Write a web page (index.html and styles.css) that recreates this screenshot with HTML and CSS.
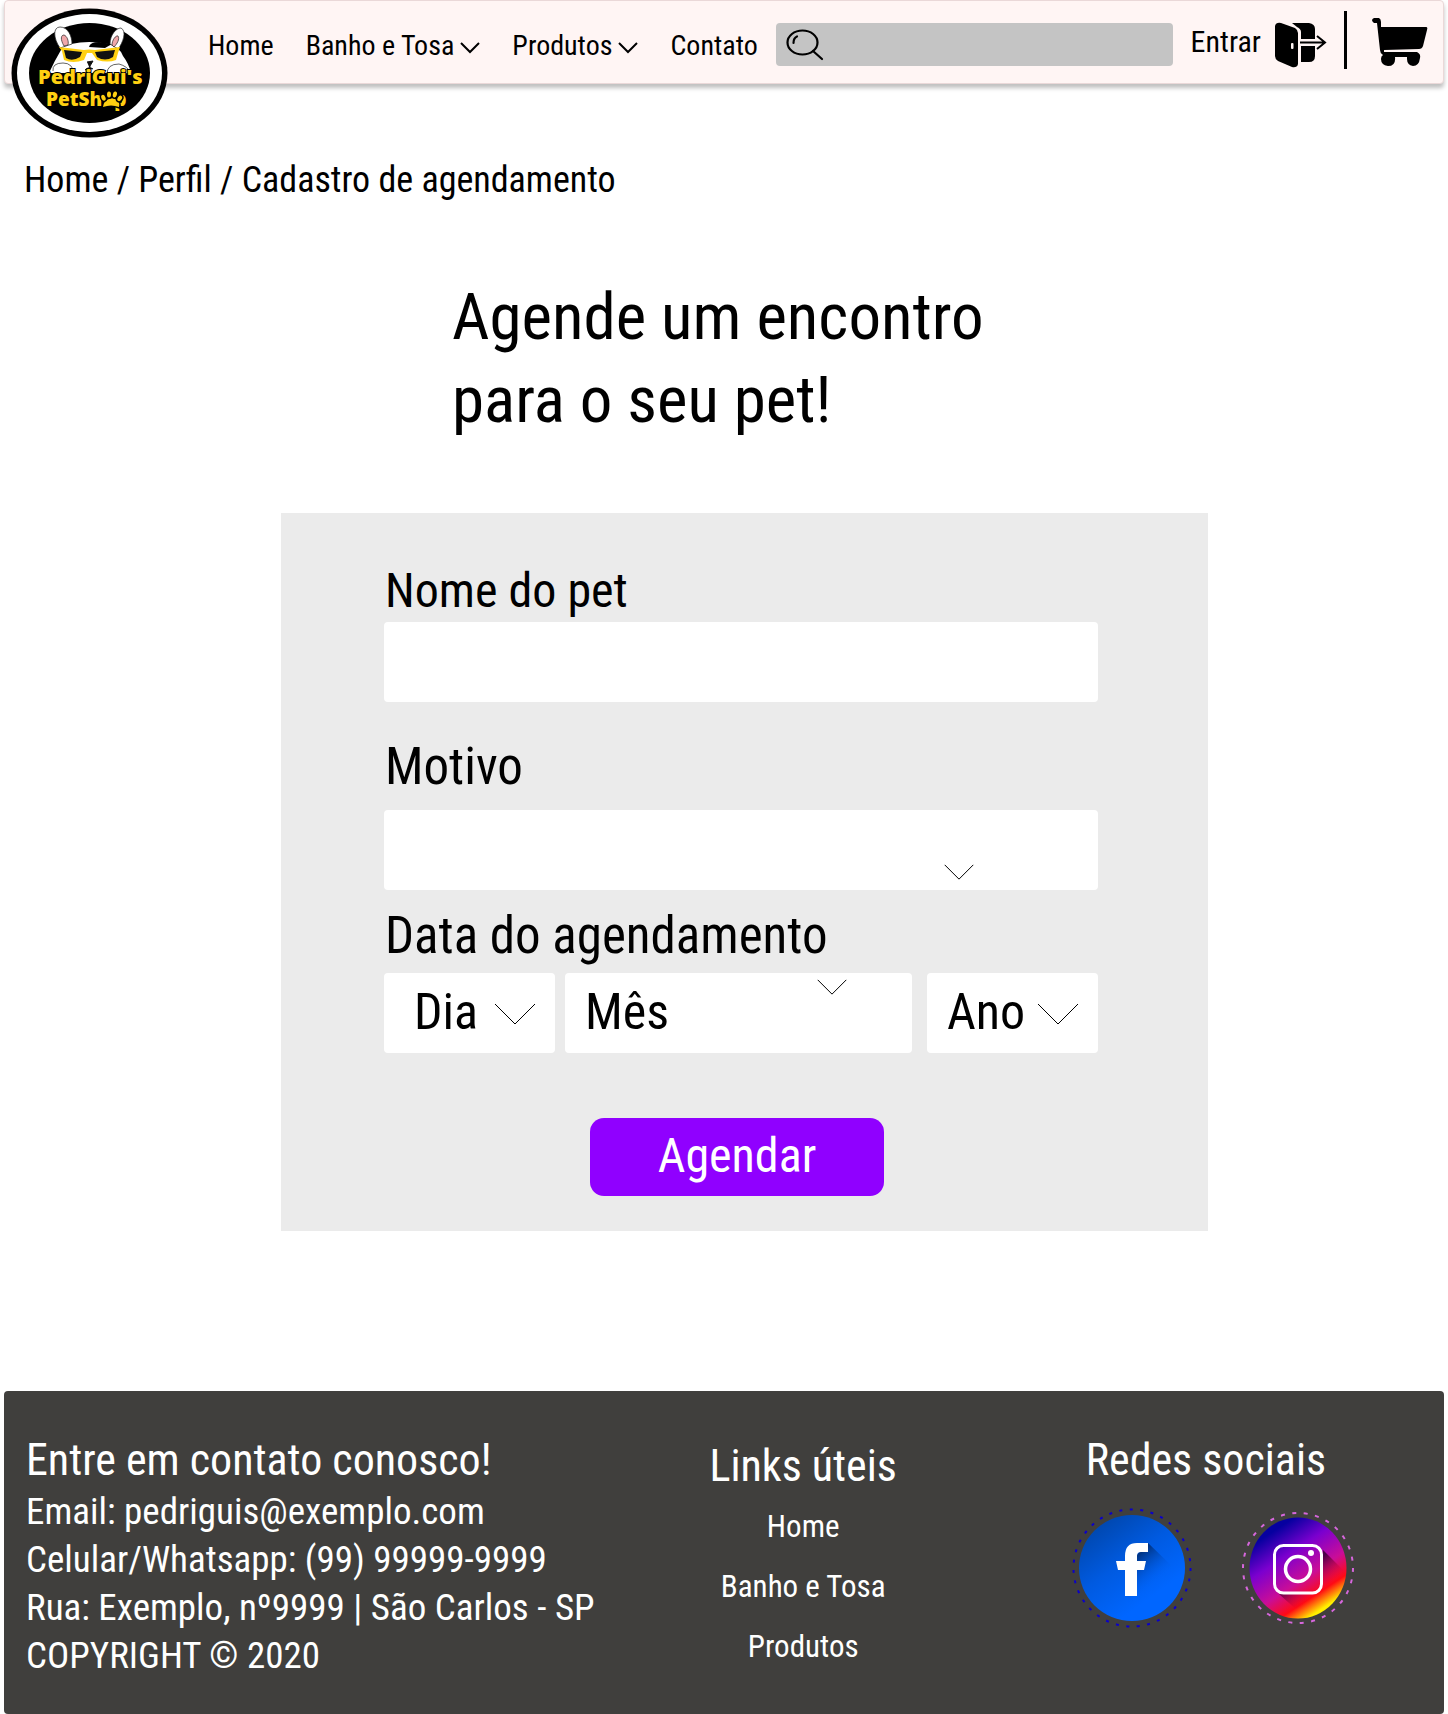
FILE: index.html
```html
<!DOCTYPE html>
<html lang="pt-BR">
<head>
<meta charset="utf-8">
<meta name="viewport" content="width=device-width, initial-scale=1">
<title>PedriGui's PetShop - Cadastro de agendamento</title>
<link rel="stylesheet" href="styles.css">
</head>
<body>
<header class="topbar">
  <a class="logo" href="#" aria-label="PedriGui's PetShop">
    <svg viewBox="0 0 157 130" width="157" height="130">
      <ellipse cx="78.500" cy="65" rx="78" ry="64.500" fill="#000"/>
      <ellipse cx="78.500" cy="65" rx="72.500" ry="59" fill="#fff"/>
      <ellipse cx="78.500" cy="65" rx="60.500" ry="50" fill="#000"/>
      <path d="M38 65Q44 52 50 42Q50 37 60 36Q78 32 97 36Q108 38 112 48Q118 56 120 65Z" fill="#fff"/>
      <path d="M78 39Q79 34 88 34L101 36L94 40Z" fill="#000"/>
      <path d="M49 40C42 30 42 19 49 19C57 19 61 28 61 36Z" fill="#fff" stroke="#222" stroke-width=".7"/>
      <path d="M53 38C49 31 50 27 53 27C56 28 58 33 57 37Z" fill="#f0a7aa" stroke="#222" stroke-width=".7"/>
      <path d="M99 36C99 27 105 20 110 20C116 23 112 35 107 41Z" fill="#fff" stroke="#222" stroke-width=".7"/>
      <path d="M101 37C101 32 105 27 107 28C109 31 106 36 103 39Z" fill="#f0a7aa" stroke="#222" stroke-width=".7"/>
      <path d="M42 63Q41 55 52 55Q62 55 63 66M96 66Q96 56 108 56Q116 58 120 65" fill="#fff" stroke="#222" stroke-width=".7"/>
      <path d="M48 39L73 42Q78 41 84 42L109 39L107 45L105 52Q97 55 86 52L81 45H76L73 52Q62 56 53 52L51 43Z" fill="#ffd011"/>
      <path d="M53 42L71 44L69 49Q61 54 55 50ZM84 44L104 42L102 49Q94 54 86 49Z" fill="#111"/>
      <path d="M76 54L82 53L79 58V61M74 62Q78 58 82 61" fill="#111" stroke="#111"/>
      <text class="logo-text" x="27" y="76">PedriGui's</text>
      <text class="logo-text logo-text-small" x="35" y="98">PetShop</text>
      <g fill="#ffd011" stroke="#000" stroke-width="3" paint-order="stroke">
        <path d="M92 99Q93 92 98 91Q102 89 106 92Q109 94 108 99Q100 96 92 99Z"/>
        <ellipse cx="92.500" cy="90" rx="2" ry="3" transform="rotate(-25 92 90)"/>
        <ellipse cx="98" cy="86.500" rx="2" ry="3"/>
        <ellipse cx="104" cy="86.500" rx="2" ry="3" transform="rotate(15 104 86)"/>
        <ellipse cx="109" cy="90.500" rx="2" ry="3" transform="rotate(35 109 90)"/>
      </g>
    </svg>
  </a>
  <nav class="nav" aria-label="Principal">
    <a href="#">Home</a>
    <a href="#">Banho e Tosa<svg class="caret" viewBox="0 0 20 12" width="20" height="12"><path d="M1 1L10 10L19 1"/></svg></a>
    <a href="#">Produtos<svg class="caret" viewBox="0 0 20 12" width="20" height="12"><path d="M1 1L10 10L19 1"/></svg></a>
    <a href="#">Contato</a>
  </nav>
  <form class="search" role="search">
    <svg viewBox="0 0 38 32" width="38" height="32" fill="none" stroke="#000" stroke-width="2.200" stroke-linecap="round">
      <ellipse cx="16.500" cy="13.500" rx="15" ry="12"/><path d="M27 22L36 30"/><path d="M7.500 14Q7.500 9 11 7.500"/>
    </svg>
    <input type="search" aria-label="Buscar">
  </form>
  <a class="login" href="#">Entrar
    <svg viewBox="0 0 52 46" width="52" height="46">
      <path d="M17 1H34Q40 2 40 7V17H26V10Q26 7 22 5Z"/>
      <path d="M26 24H40V34Q40 40 34 40H26Z"/>
      <path d="M0 4Q1 0 6 1L20 6Q23 8 23 11V42Q22 46 17 45L3 39Q0 37 0 34Z"/>
      <rect x="16" y="21" width="2.500" height="6" rx="1" fill="#fff5f4"/>
      <path d="M25 20.500H40" fill="none" stroke="#fff5f4" stroke-width="6"/>
      <path d="M25 20.500H50M42 14L50 20.500L42 27" fill="none" stroke="#000" stroke-width="2"/>
    </svg>
  </a>
  <span class="divider"></span>
  <a class="cart" href="#" aria-label="Carrinho">
    <svg viewBox="0 0 56 49" width="56" height="49">
      <path d="M2 0H7Q9 1 9 4V9H54Q56 9 55 12L51 28Q50 31 47 31L12 32V34H45Q49 36 48 40Q47 48 41 48Q35 47 35 41L35 39H23Q24 48 16 48Q9 47 9 41Q9 38 11 37Q8 35 8 32L5 5H2Q-2 2 2 0Z"/>
    </svg>
  </a>
</header>
<main>
  <nav class="breadcrumb" aria-label="Trilha"><a href="#">Home</a> / <a href="#">Perfil</a> / <span>Cadastro de agendamento</span></nav>
  <h1 class="title">Agende um encontro<br>para o seu pet!</h1>
  <form class="panel">
    <div class="field">
      <label class="label label-name" for="pet">Nome do pet</label>
      <input class="control" id="pet" type="text">
    </div>
    <div class="field field-reason">
      <label class="label" for="motivo">Motivo</label>
      <div class="picker picker-reason">
        <select class="control" id="motivo"><option></option></select>
        <svg class="chevron" viewBox="0 0 42 22" width="30" height="16"><path d="M1 1L21 21L41 1"/></svg>
      </div>
    </div>
    <fieldset class="field field-date">
      <legend class="label">Data do agendamento</legend>
      <div class="date-row">
        <div class="picker picker-day">
          <select class="control" aria-label="Dia"><option>Dia</option></select>
          <svg class="chevron" viewBox="0 0 42 22" width="42" height="22"><path d="M1 1L21 21L41 1"/></svg>
        </div>
        <div class="picker picker-month">
          <select class="control" aria-label="Mês"><option>Mês</option></select>
          <svg class="chevron" viewBox="0 0 42 22" width="30" height="16"><path d="M1 1L21 21L41 1"/></svg>
        </div>
        <div class="picker picker-year">
          <select class="control" aria-label="Ano"><option>Ano</option></select>
          <svg class="chevron" viewBox="0 0 42 22" width="42" height="22"><path d="M1 1L21 21L41 1"/></svg>
        </div>
      </div>
    </fieldset>
    <button class="submit" type="submit">Agendar</button>
  </form>
</main>
<footer class="footer">
  <section class="contact">
    <h2>Entre em contato conosco!</h2>
    <p>Email: pedriguis@exemplo.com</p>
    <p>Celular/Whatsapp: (99) 99999-9999</p>
    <p>Rua: Exemplo, nº9999 | São Carlos - SP</p>
    <p>COPYRIGHT © 2020</p>
  </section>
  <nav class="links" aria-label="Links úteis">
    <h2>Links úteis</h2>
    <a href="#">Home</a>
    <a href="#">Banho e Tosa</a>
    <a href="#">Produtos</a>
  </nav>
  <section class="social">
    <h2>Redes sociais</h2>
    <div class="social-row">
      <a href="#" aria-label="Facebook">
        <svg viewBox="0 0 120 120" width="120" height="120">
          <defs>
            <linearGradient id="fb" x1=".15" y1=".1" x2=".65" y2=".8"><stop offset="0" stop-color="#0047ae"/><stop offset=".5" stop-color="#005ae0"/><stop offset="1" stop-color="#0066ff"/></linearGradient>
            <linearGradient id="fbs" gradientUnits="userSpaceOnUse" x1="62" y1="48" x2="85" y2="75"><stop offset="0" stop-color="#002f77"/><stop offset="1" stop-color="#0066ff" stop-opacity="0"/></linearGradient>
          </defs>
          <circle cx="60" cy="60" r="58.500" fill="none" stroke="#0b00c8" stroke-width="2" stroke-dasharray="3 7.500"/>
          <circle cx="60" cy="60" r="53" fill="url(#fb)"/>
          <path d="M76 35L103 61L90 90L68 101L53 87V60Z" fill="url(#fbs)"/>
          <path d="M76 35V44H69Q65 44 65 48V53H74L72 62H65V88H53V62H46L44 53H53V48Q53 35 65 35Z" fill="#fff"/>
        </svg>
      </a>
      <a href="#" aria-label="Instagram">
        <svg viewBox="0 0 112 120" width="112" height="120">
          <defs>
            <linearGradient id="ig" gradientUnits="userSpaceOnUse" x1="24" y1="22" x2="80" y2="107"><stop offset=".05" stop-color="#0600a0"/><stop offset=".32" stop-color="#7b00cf"/><stop offset=".6" stop-color="#c90d98"/><stop offset=".8" stop-color="#ff0a14"/><stop offset=".95" stop-color="#fff000"/></linearGradient>
            <linearGradient id="igs" gradientUnits="userSpaceOnUse" x1="64" y1="62" x2="80" y2="82"><stop offset="0" stop-color="#4a0048"/><stop offset="1" stop-color="#e60028" stop-opacity="0"/></linearGradient>
          </defs>
          <circle cx="56" cy="60" r="55" fill="none" stroke="#d667dc" stroke-width="2" stroke-dasharray="4 7.500"/>
          <ellipse cx="56" cy="60" rx="48.500" ry="50.500" fill="url(#ig)"/>
          <path d="M81 42L104 65L90 84L56 103L37 86H81Z" fill="url(#igs)"/>
          <g fill="none" stroke="#fff"><rect x="32.500" y="37.500" width="47" height="47.500" rx="9" stroke-width="3" /><circle cx="56" cy="61" r="12.500" stroke-width="3.500"/></g>
          <circle cx="69" cy="45" r="3" fill="#fff"/>
        </svg>
      </a>
    </div>
  </section>
</footer>
</body>
</html>
```
FILE: styles.css
```css
* { box-sizing: border-box; }

body {
  margin: 0;
  background: #fff;
  color: #000;
  font-family: "Roboto Condensed", "Arial Narrow", Roboto, sans-serif;
}

a { color: inherit; text-decoration: none; }
h1, h2, p { margin: 0; font-weight: 400; }
svg { display: block; flex: none; }

.topbar {
  display: flex;
  align-items: flex-start;
  height: 84px;
  margin: 0 4px;
  padding-right: 15px;
  background: #fff5f4;
  border: 1px solid #ead8d8;
  border-radius: 4px;
  box-shadow: 0 4px 4px rgba(0, 0, 0, 0.25);
  font-size: 28px;
  line-height: 40px;
}

.logo { margin: 7px 0 0 6px; }
.logo-text {
  font: 800 20px "Open Sans", sans-serif;
  fill: #ffd011;
  stroke: #000;
  stroke-width: 2px;
  paint-order: stroke;
}
.logo-text-small { font-size: 19px; }

.nav { display: flex; gap: 32px; margin: 25px 18px 0 40px; }
.nav a { display: flex; align-items: center; gap: 6px; white-space: nowrap; }
.caret { margin-top: 4px; }
.caret path { fill: none; stroke: #000; stroke-width: 2; }

.search {
  display: flex;
  flex: 1;
  align-items: center;
  min-width: 0;
  height: 43px;
  margin-top: 22px;
  padding-left: 10px;
  background: #c4c4c4;
  border-radius: 4px;
}
.search input {
  flex: 1;
  min-width: 0;
  height: 43px;
  padding: 0 10px;
  border: 0;
  background: none;
  font: inherit;
  outline: 0;
}

.login { display: flex; gap: 14px; margin: 21px 0 0 18px; font-size: 30px; }
.divider { width: 3px; height: 58px; margin: 10px 25px 0 17px; background: #000; }
.cart { margin-top: 17px; }

.breadcrumb {
  margin: 72px 24px 0;
  font-size: 36px;
  line-height: 48px;
}

.title {
  margin: 72px 0 71px 452px;
  font-size: 65px;
  line-height: 83px;
}

.panel {
  margin: 0 240px 160px 281px;
  padding: 48px 110px 35px 103px;
  background: #ebebeb;
}

.field { display: flex; flex-direction: column; margin: 0; padding: 0; border: 0; min-width: 0; }
.label { display: block; padding: 0 0 0 1px; font-size: 51px; line-height: 60px; }
.label-name { margin-bottom: 1px; font-size: 48px; }
.field-reason { margin-top: 35px; }
.field-reason .label { margin-bottom: 13px; }
.field-date { margin-top: 16px; }
.field-date .label { margin-bottom: 7px; }

.control {
  display: block;
  width: 100%;
  height: 80px;
  padding: 0 20px;
  border: 0;
  border-radius: 4px;
  background: #fff;
  color: #000;
  font: inherit;
  font-size: 50px;
  appearance: none;
}

.picker { position: relative; min-width: 0; }
.picker .control { padding-bottom: 2px; }
.chevron { position: absolute; pointer-events: none; }
.chevron path { fill: none; stroke: #000; stroke-width: 1px; vector-effect: non-scaling-stroke; }
.picker-reason .chevron { right: 124px; bottom: 10px; }

.date-row { display: grid; grid-template-columns: 171px 1fr 171px; }
.picker-month { margin: 0 15px 0 10px; }
.picker-day .control { padding-left: 30px; }
.picker-day .chevron, .picker-year .chevron { right: 19px; top: 30px; }
.picker-month .chevron { right: 65px; top: 6px; }

.submit {
  display: block;
  width: 294px;
  height: 78px;
  margin: 65px 0 0 206px;
  padding: 0 0 4px;
  border: 0;
  border-radius: 14px;
  background: #9000ff;
  color: #fff;
  font: inherit;
  font-size: 48px;
}

.footer {
  display: grid;
  grid-template-columns: 44% 23% 33%;
  margin: 0 4px;
  padding: 41px 0 34px;
  background: #403f3d;
  border-radius: 4px;
  color: #fff;
}
.footer h2 { font-size: 44px; line-height: 56px; }
.contact { padding-left: 22px; font-size: 37px; line-height: 48px; }
.links {
  display: flex;
  flex-direction: column;
  align-items: center;
  padding-top: 6px;
  font-size: 31px;
  line-height: 60px;
}
.links h2 { margin-bottom: 3px; }
.social { padding-left: 13px; text-align: center; }
.social h2 { margin-right: 14px; }
.social-row { display: flex; justify-content: center; gap: 50px; margin-top: 20px; }
```
